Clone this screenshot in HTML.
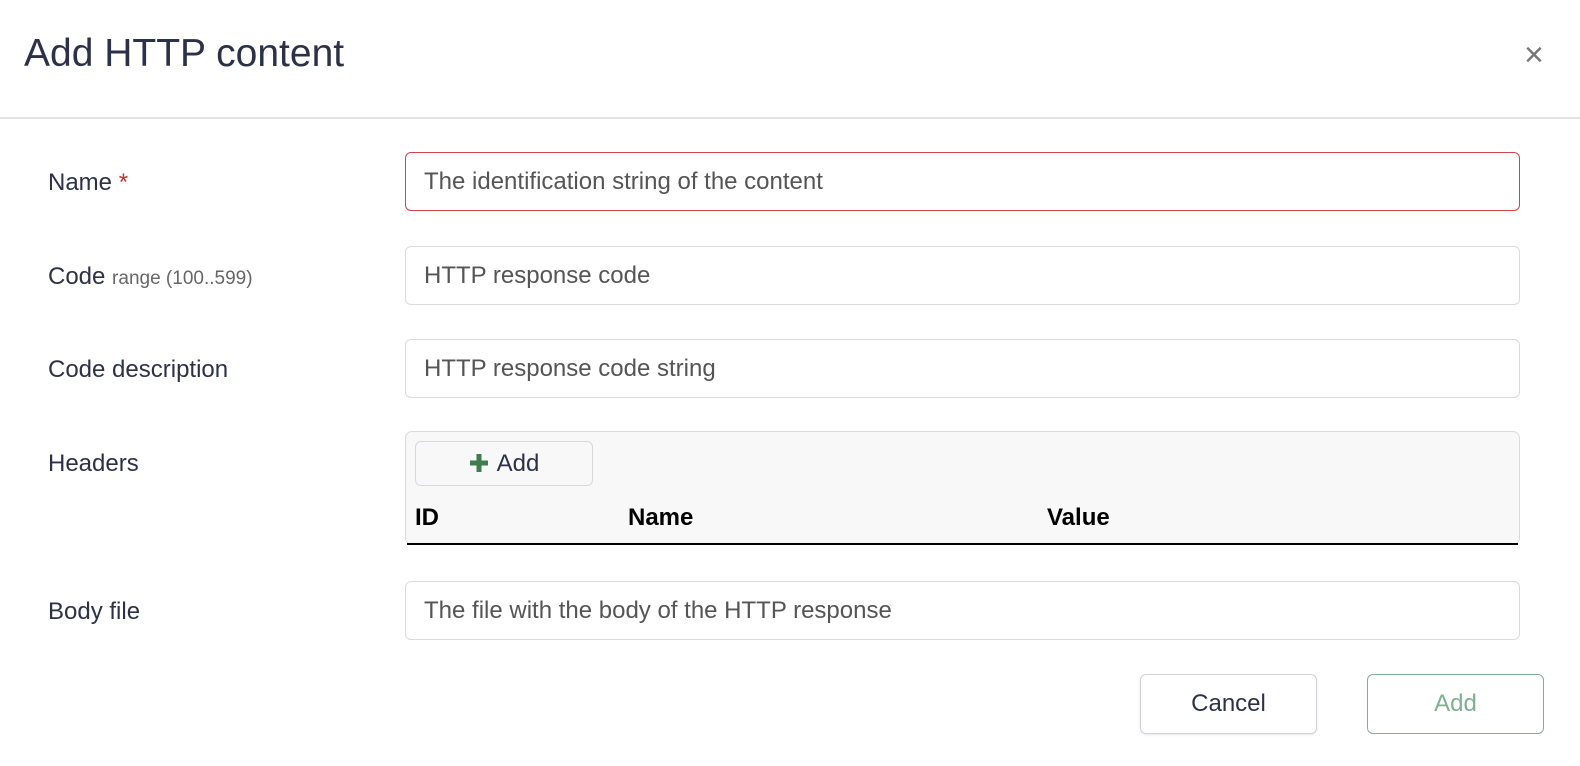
<!DOCTYPE html>
<html><head><style>
body{margin:0;width:1580px;height:766px;background:#fff;font-family:"Liberation Sans",sans-serif;position:relative;overflow:hidden;color:#2c3148}
.a{position:absolute}
.lbl{position:absolute;left:48px;font-size:24px;color:#2c3148}
.inp{position:absolute;left:405px;border:1px solid #d9dbe0;border-radius:6px;font-size:24px;color:#555;line-height:57px;padding-left:18px;box-sizing:border-box;width:1115px;height:59px}
.btn{position:absolute;border-radius:6px;font-size:24px;text-align:center;box-sizing:border-box}
</style></head><body>
<div class="a" style="left:24px;top:32px;font-size:39px;color:#2c3148">Add HTTP content</div>
<div class="a" style="left:1524px;top:36px;font-size:34px;color:#777">×</div>
<div class="a" style="left:0;top:117px;width:1580px;height:2px;background:#e3e3e3"></div>

<div class="lbl" style="top:169px">Name <span style="color:#c9302c">*</span></div>
<div class="inp" style="top:152px;border-color:#d0454c">The identification string of the content</div>

<div class="lbl" style="top:263px">Code <span style="font-size:19px;color:#666">range (100..599)</span></div>
<div class="inp" style="top:246px">HTTP response code</div>

<div class="lbl" style="top:356px">Code description</div>
<div class="inp" style="top:339px">HTTP response code string</div>

<div class="lbl" style="top:450px">Headers</div>
<div class="a" style="left:405px;top:431px;width:1115px;height:114px;background:#f8f8f8;border:1px solid #d9dbe0;border-radius:7px;box-sizing:border-box"></div>
<div class="btn" style="left:415px;top:441px;width:178px;height:45px;border:1px solid #d6d8dc;line-height:43px;background:#f8f8f8"><svg width="20" height="20" viewBox="0 0 20 20" style="vertical-align:-2px;margin-right:8px"><path d="M10 1v18M1 10h18" stroke="#3d7d4e" stroke-width="5"/></svg>Add</div>
<div class="a" style="left:415px;top:504px;font-size:24px;font-weight:bold;color:#000">ID</div>
<div class="a" style="left:628px;top:504px;font-size:24px;font-weight:bold;color:#000">Name</div>
<div class="a" style="left:1047px;top:504px;font-size:24px;font-weight:bold;color:#000">Value</div>
<div class="a" style="left:407px;top:543px;width:1111px;height:2px;background:#000"></div>

<div class="lbl" style="top:598px">Body file</div>
<div class="inp" style="top:581px">The file with the body of the HTTP response</div>

<div class="btn" style="left:1140px;top:674px;width:177px;height:60px;border:1px solid #d0d3d8;line-height:58px;color:#2c3148;box-shadow:0 1px 2px rgba(0,0,0,.1)">Cancel</div>
<div class="btn" style="left:1367px;top:674px;width:177px;height:60px;border:1px solid #7fb08f;line-height:58px;color:#7fb08f">Add</div>
</body></html>
